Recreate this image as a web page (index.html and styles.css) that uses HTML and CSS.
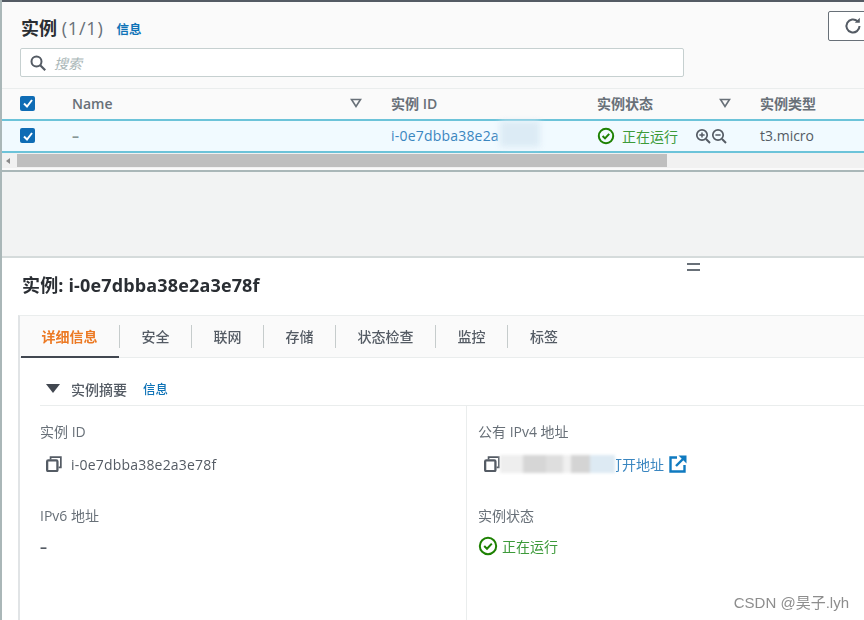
FILE: index.html
```html
<!DOCTYPE html>
<html>
<head>
    <title>实例</title>
    <link rel="stylesheet" href="styles.css">
</head>
<body>
    <div class="page">
        <div class="list-panel">
            <div class="title-row">
                <h1>实例 <span class="count">(1/1)</span></h1>
                <a class="info">信息</a>
                <button class="refresh">
                    <svg width="20" height="20" viewBox="0 0 20 20"><path d="M16.5 10a6.5 6.5 0 1 1-2-4.7" fill="none" stroke="#545b64" stroke-width="2"/><path d="M16.8 1.8v5h-5z" fill="#545b64"/></svg>
                </button>
            </div>
            <div class="search">
                <svg width="18" height="18" viewBox="0 0 18 18"><circle cx="7.5" cy="7.5" r="5" fill="none" stroke="#545b64" stroke-width="2"/><path d="M11.2 11.2l5 5" stroke="#545b64" stroke-width="2.2"/></svg>
                <span>搜索</span>
            </div>
            <div class="table-row table-head">
                <div class="cell-check"><span class="checkbox"><svg width="14" height="14" viewBox="0 0 14 14"><path d="M3 7.5l3 3 5-6.5" fill="none" stroke="#fff" stroke-width="2"/></svg></span></div>
                <div class="cell-name">Name<svg class="sort" width="12" height="10" viewBox="0 0 12 10"><path d="M1.5 1.5h9L6 8.5z" fill="none" stroke="#687078" stroke-width="1.6"/></svg></div>
                <div class="cell-id">实例 ID</div>
                <div class="cell-state">实例状态<svg class="sort" width="12" height="10" viewBox="0 0 12 10"><path d="M1.5 1.5h9L6 8.5z" fill="none" stroke="#687078" stroke-width="1.6"/></svg></div>
                <div class="cell-type">实例类型</div>
            </div>
            <div class="table-row table-selected">
                <div class="cell-check"><span class="checkbox"><svg width="14" height="14" viewBox="0 0 14 14"><path d="M3 7.5l3 3 5-6.5" fill="none" stroke="#fff" stroke-width="2"/></svg></span></div>
                <div class="cell-name dash">–</div>
                <div class="cell-id link">i-0e7dbba38e2a<span class="smudge"></span></div>
                <div class="cell-state">
                    <span class="status">
                        <svg width="18" height="18" viewBox="0 0 18 18"><circle cx="9" cy="9" r="7.2" fill="none" stroke="#1d8102" stroke-width="2"/><path d="M5.6 9l2.4 2.4 4.2-4.6" fill="none" stroke="#1d8102" stroke-width="2"/></svg>
                        正在运行
                    </span>
                    <span class="zooms">
                        <svg width="16" height="16" viewBox="0 0 16 16"><circle cx="7" cy="7" r="5.2" fill="none" stroke="#545b64" stroke-width="1.7"/><path d="M11 11l4 4" stroke="#545b64" stroke-width="1.9"/><path d="M4.4 7h5.2M7 4.4v5.2" stroke="#545b64" stroke-width="1.5"/></svg>
                        <svg width="16" height="16" viewBox="0 0 16 16"><circle cx="7" cy="7" r="5.2" fill="none" stroke="#545b64" stroke-width="1.7"/><path d="M11 11l4 4" stroke="#545b64" stroke-width="1.9"/><path d="M4.4 7h5.2" stroke="#545b64" stroke-width="1.5"/></svg>
                    </span>
                </div>
                <div class="cell-type plain">t3.micro</div>
            </div>
            <div class="scrollbar">
                <span class="scroll-arrow"></span>
                <div class="scroll-thumb"></div>
            </div>
        </div>

        <div class="gap-band"></div>

        <div class="detail-panel">
            <div class="drag-handle"></div>
            <h2>实例: i-0e7dbba38e2a3e78f</h2>
            <div class="detail-box">
                <div class="tabs">
                    <a class="tab active">详细信息</a>
                    <a class="tab">安全</a>
                    <a class="tab">联网</a>
                    <a class="tab">存储</a>
                    <a class="tab">状态检查</a>
                    <a class="tab">监控</a>
                    <a class="tab last">标签</a>
                </div>
                <div class="summary-head">
                    <span class="caret"></span>
                    <span class="summary-title">实例摘要</span>
                    <a class="info">信息</a>
                </div>
                <div class="summary-grid">
                    <div class="col-left">
                        <div class="field">
                            <div class="label">实例 ID</div>
                            <div class="value">
                                <svg width="16" height="16" viewBox="1 1 14 14"><path d="M5 4V2h9v9h-2" fill="none" stroke="#545b64" stroke-width="1.5"/><rect x="2" y="4.8" width="9" height="9.4" rx="1" fill="none" stroke="#545b64" stroke-width="2"/></svg>
                                <span class="mono-id">i-0e7dbba38e2a3e78f</span>
                            </div>
                        </div>
                        <div class="field">
                            <div class="label">IPv6 地址</div>
                            <div class="value no-icon">–</div>
                        </div>
                    </div>
                    <div class="col-right">
                        <div class="field">
                            <div class="label">公有 IPv4 地址</div>
                            <div class="value">
                                <svg width="16" height="16" viewBox="1 1 14 14"><path d="M5 4V2h9v9h-2" fill="none" stroke="#545b64" stroke-width="1.5"/><rect x="2" y="4.8" width="9" height="9.4" rx="1" fill="none" stroke="#545b64" stroke-width="2"/></svg>
                                <span class="masked"></span>
                                <a class="link">打开地址</a>
                                <svg class="ext" width="20" height="20" viewBox="0 0 20 20"><path d="M9 3.5H2.5v14h14V11" fill="none" stroke="#0f7ac0" stroke-width="2.4"/><path d="M8 12l8-8" stroke="#0f7ac0" stroke-width="2.4"/><path d="M10.5 1.5h8v8z" fill="#0f7ac0"/></svg>
                            </div>
                        </div>
                        <div class="field">
                            <div class="label">实例状态</div>
                            <div class="value status">
                                <svg width="20" height="20" viewBox="0 0 20 20"><circle cx="10" cy="10" r="8.2" fill="none" stroke="#1d8102" stroke-width="2"/><path d="M6.2 10l2.8 2.8 4.8-5.2" fill="none" stroke="#1d8102" stroke-width="2"/></svg>
                                正在运行
                            </div>
                        </div>
                    </div>
                </div>
            </div>
        </div>
        <div class="watermark">CSDN @昊子.lyh</div>
    </div>
</body>
</html>
```

FILE: styles.css
```css
* {
    box-sizing: border-box;
}
html, body {
    margin: 0;
    padding: 0;
    background: #fff;
}
.page {
    position: relative;
    width: 864px;
    height: 620px;
    overflow: hidden;
    border-left: 2px solid #aab7b8;
    font-family: "Open Sans", "Noto Sans CJK SC", sans-serif;
    font-size: 14px;
    color: #545b64;
    filter: blur(0.5px);
}
a {
    text-decoration: none;
}
.link {
    color: #3a86c0;
    letter-spacing: 0.2px;
}
.info {
    color: #0f73b7;
    font-size: 12.5px;
    font-weight: 700;
}

/* top list */
.title-row .info {
    margin-top: 3px;
}
.list-panel {
    height: 172px;
    background: #fafafa;
    border-top: 2px solid #545b64;
    border-bottom: 2px solid #aab7b8;
}
.title-row {
    display: flex;
    align-items: center;
    gap: 13px;
    height: 46px;
    padding: 4px 0 0 19px;
}
h1 {
    margin: 0;
    font-size: 18px;
    font-weight: 700;
    color: #2a2e33;
}
.count {
    font-weight: 400;
    color: #687078;
    letter-spacing: 0.8px;
}
.refresh {
    display: flex;
    align-items: center;
    margin-left: auto;
    width: 42px;
    height: 30px;
    margin-top: -2px;
    margin-right: -6px;
    padding: 0 0 0 14px;
    background: #fff;
    border: 1px solid #687078;
    border-radius: 2px;
}
.search {
    display: flex;
    align-items: center;
    gap: 7px;
    width: 664px;
    height: 29px;
    margin-left: 18px;
    padding-left: 8px;
    background: #fff;
    border: 1px solid #c6d0d0;
    border-radius: 2px;
    color: #aab7b8;
    font-style: italic;
}
.table-row {
    display: flex;
    align-items: center;
}
.table-head {
    height: 31px;
    margin-top: 11px;
    padding-bottom: 2px;
    border-top: 1px solid #eaeded;
    font-weight: 600;
    color: #687078;
}
.table-selected {
    height: 34px;
    margin-left: -2px;
    padding-left: 2px;
    padding-bottom: 1px;
    background: #f1faff;
    border-top: 2px solid #6cc3d9;
    border-bottom: 2px solid #6cc3d9;
}
.cell-check {
    width: 70px;
    padding-left: 18px;
}
.checkbox {
    display: flex;
    align-items: center;
    justify-content: center;
    width: 15px;
    height: 15px;
    background: #0f6cb5;
    border-radius: 2px;
}
.cell-name {
    display: flex;
    align-items: center;
    justify-content: space-between;
    width: 303px;
    padding-right: 13px;
}
.cell-id {
    position: relative;
    width: 205px;
    padding-left: 16px;
}
.cell-state {
    display: flex;
    align-items: center;
    justify-content: space-between;
    width: 164px;
    padding-left: 17px;
    padding-right: 13px;
}
.cell-type {
    padding-left: 16px;
}
.sort {
    flex: none;
}
.dash {
    color: #879596;
    font-weight: 700;
}
.plain {
    color: #545b64;
}
.smudge {
    position: absolute;
    left: 125px;
    top: -5px;
    width: 40px;
    height: 26px;
    background: #dcebf5;
    filter: blur(3px);
}
.status {
    display: flex;
    align-items: center;
    gap: 7px;
    color: #3d9a3a;
}
.zooms {
    display: flex;
    margin-right: 4px;
}
.scrollbar {
    display: flex;
    align-items: center;
    height: 15px;
    margin-left: -2px;
    background: #f1f1f1;
}
.scroll-arrow {
    width: 0;
    height: 0;
    margin: 0 7px 0 6px;
    border-top: 3px solid transparent;
    border-bottom: 3px solid transparent;
    border-right: 4px solid #8a8a8a;
}
.scroll-thumb {
    width: 650px;
    height: 13px;
    background: #bfbfbf;
}
.gap-band {
    height: 86px;
    background: #f2f3f3;
    border-bottom: 2px solid #d5dbdb;
}

/* details */
.detail-panel {
    position: relative;
    padding: 0 0 0 16px;
}
.drag-handle {
    position: absolute;
    left: 685px;
    top: 5px;
    width: 13px;
    height: 8px;
    border-top: 2px solid #687078;
    border-bottom: 2px solid #687078;
}
h2 {
    margin: 0;
    height: 57px;
    padding: 13px 0 0 4px;
    font-size: 18px;
    font-weight: 700;
    line-height: 28px;
    letter-spacing: 0.15px;
    color: #2a2e33;
}
.detail-box {
    border-left: 2px solid #e1e4e6;
    border-top: 1px solid #eaeded;
    height: 310px;
}
.tabs {
    display: flex;
    align-items: center;
    height: 42px;
    padding-bottom: 1px;
    background: #fafafa;
    border-bottom: 1px solid #eaeded;
}
.tab {
    position: relative;
    display: flex;
    align-items: center;
    justify-content: center;
    width: 72px;
    height: 23px;
    color: #545b64;
    font-weight: 500;
    border-right: 1px solid #c6cccc;
    padding-bottom: 1px;
}
.tab.active {
    width: 100px;
    color: #ec7a24;
    font-weight: 700;
}
.tab.active::after {
    content: "";
    position: absolute;
    left: 1px;
    right: 0;
    bottom: -10px;
    height: 2px;
    background: #414750;
}
.tab:nth-child(5) {
    width: 100px;
}
.tab.last {
    border-right: none;
}
.summary-head {
    display: flex;
    align-items: center;
    height: 48px;
    margin-left: 20px;
    padding-top: 14px;
    padding-left: 6px;
    border-bottom: 1px solid #eaeded;
}
.caret {
    width: 0;
    height: 0;
    margin-right: 11px;
    border-left: 7px solid transparent;
    border-right: 7px solid transparent;
    border-top: 9px solid #414750;
}
.summary-title {
    margin-right: 16px;
    font-weight: 500;
}
.summary-head .info {
    font-weight: 500;
}
.summary-grid {
    display: flex;
    height: 220px;
}
.col-left {
    width: 447px;
    padding: 17px 0 0 20px;
    border-right: 1px solid #eaeded;
}
.col-right {
    padding: 17px 0 0 11px;
}
.field {
    height: 84px;
}
.label {
    height: 18px;
    line-height: 18px;
    color: #687078;
}
.value {
    display: flex;
    align-items: center;
    gap: 9px;
    height: 22px;
    margin-top: 12px;
    padding-left: 6px;
    color: #545b64;
}
.mono-id {
    letter-spacing: 0.2px;
}
.value.no-icon {
    margin-top: 10px;
    padding-left: 0;
    font-weight: 700;
}
.value.status {
    margin-top: 10px;
    padding-left: 0;
    gap: 4px;
    color: #3d9a3a;
}
.masked {
    width: 115px;
    height: 18px;
    margin-left: -9px;
    margin-right: -16px;
    background: linear-gradient(90deg, #eee 0 20%, #d6d6d6 20% 40%, #dedede 40% 55%, #f0f0f0 55% 62%, #d4d4d4 62% 78%, #ddeaf3 78%);
    filter: blur(1.5px);
}
.col-right .link {
    margin-right: -5px;
    letter-spacing: 0;
    clip-path: inset(0 0 0 8px);
}
.ext {
    flex: none;
}
.watermark {
    position: absolute;
    right: 15px;
    bottom: 8px;
    font-family: "Liberation Sans", "Noto Sans CJK SC", sans-serif;
    font-size: 15px;
    color: #8d8d8d;
}
```
